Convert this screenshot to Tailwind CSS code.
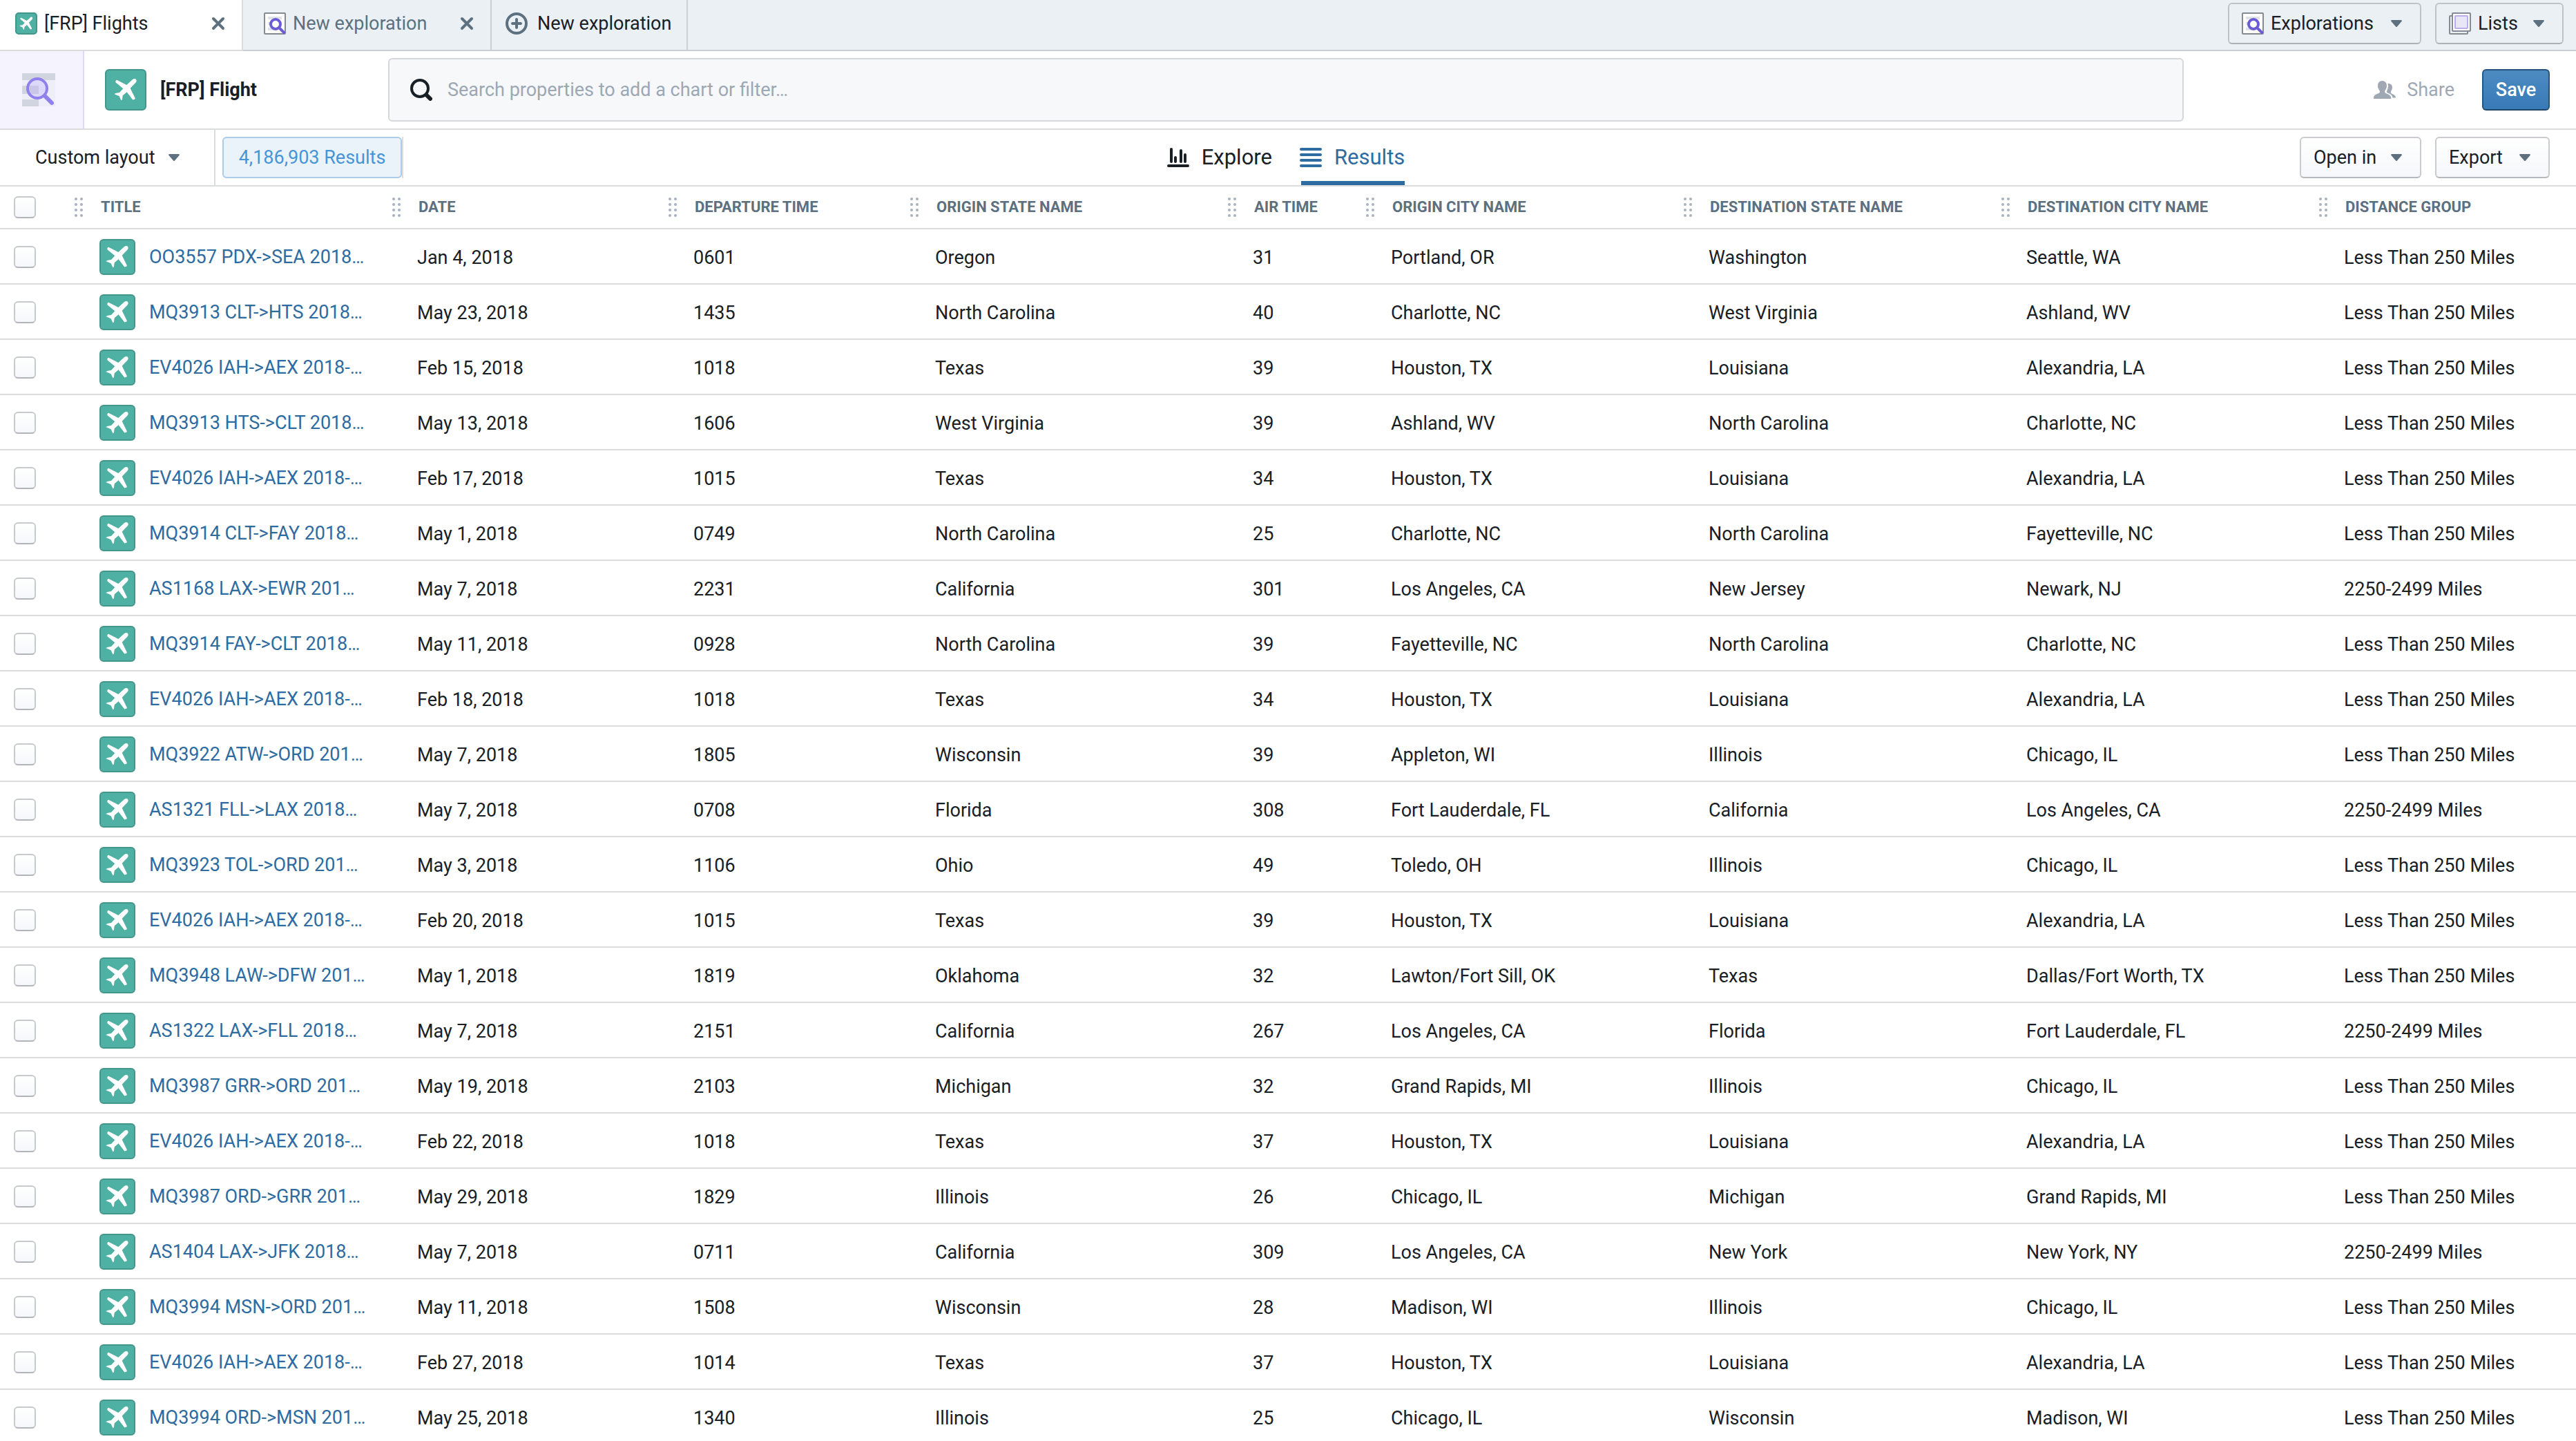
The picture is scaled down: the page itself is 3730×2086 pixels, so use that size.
<!DOCTYPE html>
<html lang="en">
<head>
    <meta charset="UTF-8">
    <meta name="viewport" content="width=device-width, initial-scale=1.0">
    <title>[FRP] Flights</title>
    <script src="https://cdn.jsdelivr.net/npm/@tailwindcss/browser@4"></script>
</head>
<body class="h-screen overflow-hidden bg-white font-['Roboto',sans-serif] text-[27px] leading-[32px] text-[#182026]">
    <!-- shared icons -->
    <svg class="hidden">
        <symbol id="plane" viewBox="0 0 102 102">
            <path fill="#fff" d="M81 6L55 30L14 9Q10 7 8 12L7 15Q6 18 9 20L40 46L24 63L10 65Q4 66 2 70L23 79L31 97Q35 96 36 92L38 76L56 61L80 92Q82 95 85 94L90 92Q93 90 92 87L71 44L94 20Q99 15 98 10Q96 3 90 3Q85 3 81 6Z"/>
        </symbol>
        <symbol id="exploration" viewBox="0 0 32 32">
            <rect x="1" y="1" width="30" height="30" rx="1" fill="#fff" stroke="#868b91" stroke-width="2"/>
            <path fill="#dfe2e6" d="M6 6h20v4H6zM6 14h12v4H6zM6 22h14v4H6z"/>
            <circle cx="17" cy="17" r="7" fill="#fff" stroke="#6c5bd4" stroke-width="4"/>
            <path d="M22 22l7 7" stroke="#6c5bd4" stroke-width="4" stroke-linecap="square"/>
        </symbol>
        <symbol id="cross" viewBox="0 0 20 20">
            <path d="M3 3l14 14M17 3L3 17" stroke="#5c7080" stroke-width="4" stroke-linecap="round"/>
        </symbol>
        <symbol id="caret" viewBox="0 0 16 10">
            <path fill="#5c7080" d="M1 0h14q1.500 .6 .5 2L9 9.500q-1 1-2 0L.5 2Q-.5 .6 1 0z"/>
        </symbol>
        <symbol id="drag" viewBox="0 0 12 28">
            <g fill="#a7b1bd">
                <circle cx="2" cy="2" r="2"/><circle cx="10" cy="2" r="2"/>
                <circle cx="2" cy="10" r="2"/><circle cx="10" cy="10" r="2"/>
                <circle cx="2" cy="18" r="2"/><circle cx="10" cy="18" r="2"/>
                <circle cx="2" cy="26" r="2"/><circle cx="10" cy="26" r="2"/>
            </g>
        </symbol>
    </svg>

    <header>
        <!-- tabs -->
        <nav class="flex h-[74px] bg-[#ebf0f4]">
            <div class="flex w-[352px] items-center border-r-2 border-b-2 border-[#dbdcdd] bg-white pr-6 pb-1 pl-[22px]">
                <span class="mr-2.5 flex size-8 items-center justify-center rounded-[5px] border-2 border-[#44968b] bg-[#4fb0a4]"><svg class="size-5"><use href="#plane"/></svg></span>
                <a href="#">[FRP] Flights</a>
                <button class="ml-auto" aria-label="Close"><svg class="size-5"><use href="#cross"/></svg></button>
            </div>
            <div class="flex w-[360px] items-center border-r-2 border-b-2 border-[#ccd0d4] pr-6 pb-1 pl-[30px]">
                <svg class="mr-2.5 size-8"><use href="#exploration"/></svg>
                <a href="#" class="text-[#5c7080]">New exploration</a>
                <button class="ml-auto" aria-label="Close"><svg class="size-5"><use href="#cross"/></svg></button>
            </div>
            <button class="flex w-[284px] items-center gap-3.5 border-r-2 border-b-2 border-[#ccd0d4] pb-1 pl-5">
                <svg class="size-8" viewBox="0 0 32 32" fill="none" stroke="#5c7080" stroke-width="4" stroke-linecap="round">
                    <circle cx="16" cy="16" r="14"/>
                    <path d="M16 10v12M10 16h12"/>
                </svg>
                New exploration
            </button>
            <div class="flex flex-1 justify-end gap-5 border-b-2 border-[#ccd0d4] pt-1 pr-[18px]">
                <button class="flex h-[60px] w-[280px] items-center gap-2.5 rounded-md border-2 border-[#bfc3c7] border-b-[#adb1b5] px-[18px]">
                    <svg class="size-8"><use href="#exploration"/></svg>
                    Explorations
                    <svg class="mr-2 ml-auto h-2.5 w-4"><use href="#caret"/></svg>
                </button>
                <button class="flex h-[60px] w-[186px] items-center gap-2.5 rounded-md border-2 border-[#bfc3c7] border-b-[#adb1b5] px-[18px]">
                    <svg class="size-8" viewBox="0 0 32 32" stroke="#868b91" stroke-width="2">
                        <rect x="1" y="5" width="26" height="26" rx="1" fill="#ebf0f4"/>
                        <rect x="5" y="1" width="26" height="26" rx="1" fill="#fff"/>
                        <rect x="9" y="5" width="18" height="18" rx="1" fill="#e9e6f6" stroke="#b8aee9"/>
                    </svg>
                    Lists
                    <svg class="mr-2 ml-auto h-2.5 w-4"><use href="#caret"/></svg>
                </button>
            </div>
        </nav>

        <!-- search -->
        <div class="flex h-[114px] items-center border-b-2 border-[#dbdcdd]">
            <div class="flex h-full w-[122px] items-center border-r-2 border-[#dcd8fa] bg-[#f5f3fe] pl-8">
                <svg class="size-12" viewBox="0 0 48 48">
                    <path fill="#eeeef8" d="M0 0h48v48H0z"/>
                    <path fill="#d0d5df" d="M0 0h48v10H0zM0 18h24v12H0zM0 38h24v10H0z"/>
                    <circle cx="22" cy="22" r="14" fill="#b9aef5" fill-opacity=".35" stroke="#8f80ec" stroke-width="4"/>
                    <path d="M33 33l10 10" stroke="#8f80ec" stroke-width="6" stroke-linecap="round"/>
                </svg>
            </div>
            <div class="flex w-[440px] items-center gap-5 pl-[30px]">
                <span class="flex size-[60px] items-center justify-center rounded-md border-2 border-[#44968b] bg-[#4fb0a4]"><svg class="size-[34px]"><use href="#plane"/></svg></span>
                <h1 class="font-bold">[FRP] Flight</h1>
            </div>
            <label class="flex h-[92px] flex-1 items-center gap-[22px] rounded-md border-2 border-[#d5d7da] bg-[#f6f8fa] pl-[30px]">
                <svg class="size-8" viewBox="0 0 32 32" fill="none" stroke="#182026">
                    <circle cx="14" cy="14" r="12" stroke-width="4"/>
                    <path d="M24 24l5 5" stroke-width="6" stroke-linecap="round"/>
                </svg>
                <input type="text" aria-label="Search" placeholder="Search properties to add a chart or filter…" class="flex-1 outline-none placeholder:text-[#9ca8b4]">
            </label>
            <div class="flex w-[568px] items-center justify-end gap-10 pr-[38px]">
                <button class="flex items-center gap-4 text-[#a0a9b3]" disabled>
                    <svg class="h-[26px] w-8" viewBox="0 0 32 26" fill="#a0a9b3">
                        <path d="M12.500 0C16.500 0 19 3 19 7c0 2-.3 3-1 4.500-.5 1.500-2 2.500-2 4 0 2 1.500 2.300 4 3.500 3.500 1.500 5 2.500 5.500 7H0c0-4.500 1.500-5.500 5-7 2.500-1 4-1.500 4-3.500 0-1.500-1.500-2.500-2-4C6.300 10 6 9 6 7c0-4 2.500-7 6.500-7z"/>
                        <path d="M20.500 4C24.500 3.500 27 6 27 9.500c0 2-.6 3.500-1.500 5-.8 1.300-1.200 3.200.5 4 3 1.500 6 2.500 6 6h-4.500c-.5-3-2-5-6-6.500-2-.8-3.200-1.500-2.500-3C20.500 12 21.700 8 20.500 4z"/>
                    </svg>
                    Share
                </button>
                <button class="h-[60px] w-[98px] rounded-md border-2 border-[#26547d] border-b-[#1f4466] bg-linear-to-b from-[#4c8ac1] to-[#387bb8] font-medium text-white">Save</button>
            </div>
        </div>

        <!-- toolbar -->
        <div class="grid h-[82px] grid-cols-[1fr_auto_1fr] border-b-2 border-[#dbdcdd]">
            <div class="flex items-center">
                <button class="flex h-full w-[312px] items-center gap-5 border-r-2 border-[#dbdcdd] pl-[51px]">
                    Custom layout
                    <svg class="h-2.5 w-4"><use href="#caret"/></svg>
                </button>
                <div class="ml-2.5 border-r-2 border-[#dbdcdd]">
                    <div class="flex h-[60px] w-[260px] items-center justify-center rounded-md border-2 border-[#a9cceb] bg-[#ebf3fa] text-[#4795d6]">4,186,903 Results</div>
                </div>
            </div>
            <div class="flex gap-10 pr-1.5 text-[31px]">
                <button class="flex items-center gap-[18px]">
                    <svg class="h-7 w-8" viewBox="0 0 32 28" fill="none" stroke="#182026" stroke-width="4" stroke-linecap="round">
                        <path d="M2 26h28M6 2v18M12 14v6M20 4v16M26 10v10"/>
                    </svg>
                    Explore
                </button>
                <button class="relative flex items-center gap-[18px] text-[#2d6ba1]">
                    <svg class="h-7 w-8" viewBox="0 0 32 28" stroke="#2d6ba1" stroke-width="4" stroke-linecap="round">
                        <path d="M2 2h28M2 10h28M2 18h28M2 26h28"/>
                    </svg>
                    Results
                    <span class="absolute right-0 bottom-0 left-0.5 h-1.5 bg-[#2d6ba1]"></span>
                </button>
            </div>
            <div class="flex items-center justify-end gap-5 pr-[38px]">
                <button class="flex h-[60px] w-44 items-center rounded-md border-2 border-[#c9cbce] border-b-[#b5b8bc] bg-linear-to-b from-white to-[#f5f7fa] px-[18px]">
                    Open in
                    <svg class="mr-2 ml-auto h-2.5 w-4"><use href="#caret"/></svg>
                </button>
                <button class="flex h-[60px] w-[166px] items-center rounded-md border-2 border-[#c9cbce] border-b-[#b5b8bc] bg-linear-to-b from-white to-[#f5f7fa] px-[18px]">
                    Export
                    <svg class="mr-2 ml-auto h-2.5 w-4"><use href="#caret"/></svg>
                </button>
            </div>
        </div>
    </header>

    <main>
        <table class="w-full table-fixed border-separate border-spacing-0 text-left whitespace-nowrap">
            <colgroup>
                <col class="w-[100px]"><col class="w-[460px]"><col class="w-[400px]"><col class="w-[350px]"><col class="w-[460px]">
                <col class="w-[200px]"><col class="w-[460px]"><col class="w-[460px]"><col class="w-[460px]"><col>
            </colgroup>
            <thead class="text-[22px] text-[#5c7080]">
                <tr id="columns">
                    <th class="h-[62px] border-b-2 border-[#dbdcdd] pl-5"><input type="checkbox" aria-label="Select all" class="block size-8 appearance-none rounded-md border-2 border-[#c8cbce] border-b-[#b2b6ba] bg-linear-to-b from-white to-[#f5f7fa]"></th>
                </tr>
            </thead>
            <tbody id="flights"></tbody>
        </table>
    </main>

    <script>
        const columns = ['TITLE', 'DATE', 'DEPARTURE TIME', 'ORIGIN STATE NAME', 'AIR TIME', 'ORIGIN CITY NAME', 'DESTINATION STATE NAME', 'DESTINATION CITY NAME', 'DISTANCE GROUP'];
        const near = 'Less Than 250 Miles';
        const far = '2250-2499 Miles';
        const flights = [
            ['OO3557 PDX->SEA 2018…', 'Jan 4, 2018', '0601', 'Oregon', '31', 'Portland, OR', 'Washington', 'Seattle, WA', near],
            ['MQ3913 CLT->HTS 2018…', 'May 23, 2018', '1435', 'North Carolina', '40', 'Charlotte, NC', 'West Virginia', 'Ashland, WV', near],
            ['EV4026 IAH->AEX 2018-…', 'Feb 15, 2018', '1018', 'Texas', '39', 'Houston, TX', 'Louisiana', 'Alexandria, LA', near],
            ['MQ3913 HTS->CLT 2018…', 'May 13, 2018', '1606', 'West Virginia', '39', 'Ashland, WV', 'North Carolina', 'Charlotte, NC', near],
            ['EV4026 IAH->AEX 2018-…', 'Feb 17, 2018', '1015', 'Texas', '34', 'Houston, TX', 'Louisiana', 'Alexandria, LA', near],
            ['MQ3914 CLT->FAY 2018…', 'May 1, 2018', '0749', 'North Carolina', '25', 'Charlotte, NC', 'North Carolina', 'Fayetteville, NC', near],
            ['AS1168 LAX->EWR 201…', 'May 7, 2018', '2231', 'California', '301', 'Los Angeles, CA', 'New Jersey', 'Newark, NJ', far],
            ['MQ3914 FAY->CLT 2018…', 'May 11, 2018', '0928', 'North Carolina', '39', 'Fayetteville, NC', 'North Carolina', 'Charlotte, NC', near],
            ['EV4026 IAH->AEX 2018-…', 'Feb 18, 2018', '1018', 'Texas', '34', 'Houston, TX', 'Louisiana', 'Alexandria, LA', near],
            ['MQ3922 ATW->ORD 201…', 'May 7, 2018', '1805', 'Wisconsin', '39', 'Appleton, WI', 'Illinois', 'Chicago, IL', near],
            ['AS1321 FLL->LAX 2018…', 'May 7, 2018', '0708', 'Florida', '308', 'Fort Lauderdale, FL', 'California', 'Los Angeles, CA', far],
            ['MQ3923 TOL->ORD 201…', 'May 3, 2018', '1106', 'Ohio', '49', 'Toledo, OH', 'Illinois', 'Chicago, IL', near],
            ['EV4026 IAH->AEX 2018-…', 'Feb 20, 2018', '1015', 'Texas', '39', 'Houston, TX', 'Louisiana', 'Alexandria, LA', near],
            ['MQ3948 LAW->DFW 201…', 'May 1, 2018', '1819', 'Oklahoma', '32', 'Lawton/Fort Sill, OK', 'Texas', 'Dallas/Fort Worth, TX', near],
            ['AS1322 LAX->FLL 2018…', 'May 7, 2018', '2151', 'California', '267', 'Los Angeles, CA', 'Florida', 'Fort Lauderdale, FL', far],
            ['MQ3987 GRR->ORD 201…', 'May 19, 2018', '2103', 'Michigan', '32', 'Grand Rapids, MI', 'Illinois', 'Chicago, IL', near],
            ['EV4026 IAH->AEX 2018-…', 'Feb 22, 2018', '1018', 'Texas', '37', 'Houston, TX', 'Louisiana', 'Alexandria, LA', near],
            ['MQ3987 ORD->GRR 201…', 'May 29, 2018', '1829', 'Illinois', '26', 'Chicago, IL', 'Michigan', 'Grand Rapids, MI', near],
            ['AS1404 LAX->JFK 2018…', 'May 7, 2018', '0711', 'California', '309', 'Los Angeles, CA', 'New York', 'New York, NY', far],
            ['MQ3994 MSN->ORD 201…', 'May 11, 2018', '1508', 'Wisconsin', '28', 'Madison, WI', 'Illinois', 'Chicago, IL', near],
            ['EV4026 IAH->AEX 2018-…', 'Feb 27, 2018', '1014', 'Texas', '37', 'Houston, TX', 'Louisiana', 'Alexandria, LA', near],
            ['MQ3994 ORD->MSN 201…', 'May 25, 2018', '1340', 'Illinois', '25', 'Chicago, IL', 'Wisconsin', 'Madison, WI', near]
        ];

        document.getElementById('columns').insertAdjacentHTML('beforeend', columns.map(name => `
            <th class="border-b-2 border-[#dbdcdd] pl-2 font-bold">
                <div class="flex items-center gap-[26px]">
                    <svg class="h-7 w-3"><use href="#drag"/></svg>${name}
                </div>
            </th>`).join(''));

        document.getElementById('flights').innerHTML = flights.map(([title, ...cells]) => `
            <tr>
                <td class="h-20 border-b-2 border-[#dbdcdd] pt-0.5 pl-5">
                    <input type="checkbox" aria-label="Select ${title}" class="block size-8 appearance-none rounded-md border-2 border-[#c8cbce] border-b-[#b2b6ba] bg-linear-to-b from-white to-[#f5f7fa]">
                </td>
                <td class="border-b-2 border-[#dbdcdd] pt-0.5 pl-11">
                    <a href="#" class="flex items-center gap-5 text-[#2d6ba1]">
                        <span class="flex size-[52px] items-center justify-center rounded-md border-2 border-[#44968b] bg-[#4fb0a4]"><svg class="size-[34px]"><use href="#plane"/></svg></span>
                        ${title.replace('>', '&gt;')}
                    </a>
                </td>
                ${cells.map(cell => `<td class="border-b-2 border-[#dbdcdd] pt-1 pl-11">${cell}</td>`).join('')}
            </tr>`).join('');
    </script>
</body>
</html>
